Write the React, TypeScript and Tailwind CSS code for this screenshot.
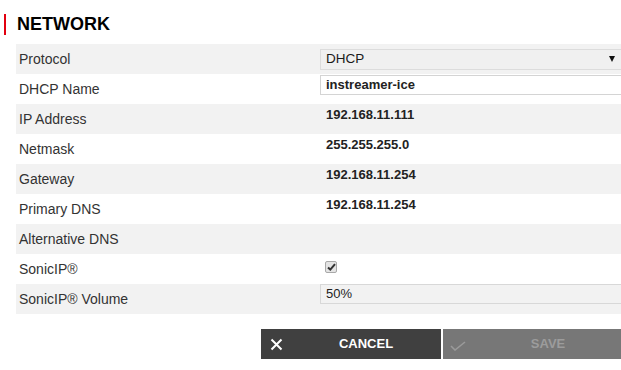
import { useState } from "react";

type Row = {
  label: string;
  kind: "select" | "input" | "text" | "check" | "volume" | "empty";
  value?: string;
};

const rows: Row[] = [
  { label: "Protocol", kind: "select", value: "DHCP" },
  { label: "DHCP Name", kind: "input", value: "instreamer-ice" },
  { label: "IP Address", kind: "text", value: "192.168.11.111" },
  { label: "Netmask", kind: "text", value: "255.255.255.0" },
  { label: "Gateway", kind: "text", value: "192.168.11.254" },
  { label: "Primary DNS", kind: "text", value: "192.168.11.254" },
  { label: "Alternative DNS", kind: "empty" },
  { label: "SonicIP®", kind: "check" },
  { label: "SonicIP® Volume", kind: "volume", value: "50%" },
];

const ValueCell = ({ row }: { row: Row }) => {
  switch (row.kind) {
    case "select":
      return (
        <div className="flex h-[30px] items-center">
          <div className="flex h-[21px] w-[310px] items-center justify-between border border-[#dcdcdc] bg-[#f0f0f0] pl-[5px] pr-[14px] text-[13.5px] text-[#1a1a1a]">
            <span>{row.value}</span>
            <svg width="6" height="6" viewBox="0 0 6 6">
              <path d="M0 0 H6 L3 6 Z" fill="#111" />
            </svg>
          </div>
        </div>
      );
    case "input":
      return (
        <div className="flex h-[30px] items-start pt-[1px]">
          <div className="flex h-[20px] w-[310px] items-center border border-[#d4d4d4] bg-white pl-[5px] text-[13px] font-bold text-[#222]">
            {row.value}
          </div>
        </div>
      );
    case "text":
      return (
        <div className="h-[30px] pl-[6px] pt-[3px] text-[13px] font-bold leading-[16px] text-[#222]">
          {row.value}
        </div>
      );
    case "check":
      return (
        <div className="flex h-[30px] items-start pl-[5px] pt-[7px]">
          <span className="flex h-[12px] w-[12px] items-center justify-center rounded-[2px] border border-[#a9a9a9] bg-[#e4e4e4]">
            <svg width="9" height="8" viewBox="0 0 9 8">
              <path d="M1 4.5 L3.3 6.6 L8 1.2" fill="none" stroke="#333" strokeWidth="2" />
            </svg>
          </span>
        </div>
      );
    case "volume":
      return (
        <div className="flex h-[30px] items-start">
          <div className="flex h-[20px] w-[310px] items-center border border-[#d8d8d8] bg-[#f2f2f2] pl-[5px] text-[13px] text-[#222]">
            {row.value}
          </div>
        </div>
      );
    default:
      return <div className="h-[30px]" />;
  }
};

export default function App() {
  const [hover, setHover] = useState(false);

  return (
    <div className="h-[370px] w-[621px] overflow-hidden bg-white font-['Liberation_Sans',Arial,sans-serif]">
      <div className="flex h-[44px] items-start pl-1 pt-[14px]">
        <div className="h-[21px] border-l-2 border-[#e2000f] pl-[11px] text-[18px] font-bold leading-[21px] text-black">
          NETWORK
        </div>
      </div>
      <div className="ml-4 w-[620px]">
        {rows.map((row, i) => (
          <div
            key={row.label}
            className={
              "grid grid-cols-[304px_1fr] " +
              (i % 2 === 0 ? "bg-[#f2f2f2]" : "bg-white")
            }
          >
            <div className="flex h-[30px] items-center pl-[3px] text-[14px] text-[#333]">
              {row.label}
            </div>
            <ValueCell row={row} />
          </div>
        ))}
      </div>
      <div className="mt-[15px] flex w-[623px] justify-end gap-[2px]">
        <button
          onMouseEnter={() => setHover(true)}
          onMouseLeave={() => setHover(false)}
          className={
            "flex h-[30px] w-[180px] items-center text-[13px] font-bold text-white " +
            (hover ? "bg-[#333]" : "bg-[#404040]")
          }
        >
          <span className="flex w-[30px] items-center justify-center">
            <svg width="13" height="13" viewBox="0 0 13 13">
              <path d="M1.5 1.5 L11.5 11.5 M11.5 1.5 L1.5 11.5" stroke="#fff" strokeWidth="2" />
            </svg>
          </span>
          <span className="flex-1 text-center">CANCEL</span>
        </button>
        <button
          disabled
          className="flex h-[30px] w-[180px] items-center bg-[#777] text-[13px] font-bold text-[#9c9c9c]"
        >
          <span className="flex w-[30px] items-center justify-center pt-[3px]">
            <svg width="16" height="10" viewBox="0 0 16 10">
              <path d="M1 5 L5 9 L15 1" fill="none" stroke="#9a9a9a" strokeWidth="1.6" />
            </svg>
          </span>
          <span className="flex-1 text-center">SAVE</span>
        </button>
      </div>
    </div>
  );
}
